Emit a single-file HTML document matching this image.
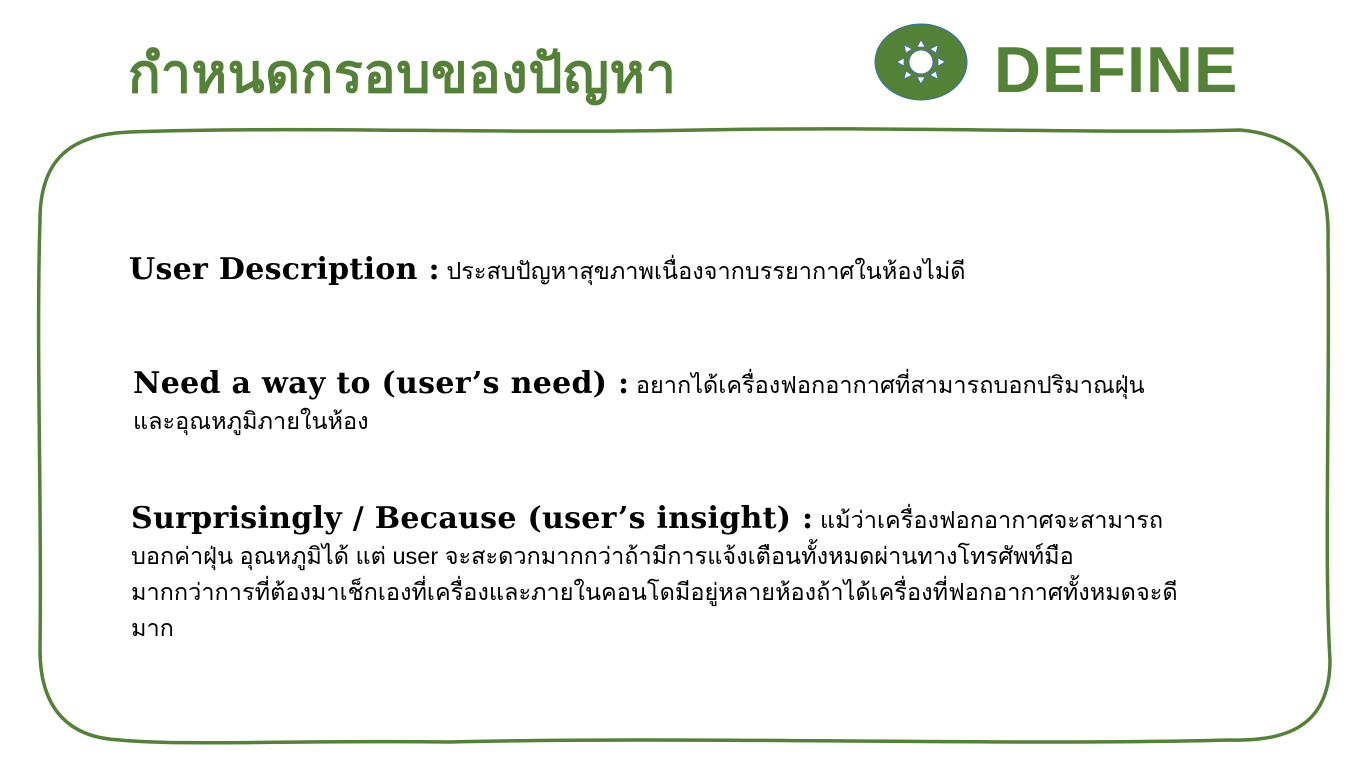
<!DOCTYPE html>
<html><head><meta charset="utf-8">
<style>
body{margin:0;width:1365px;height:767px;background:#fff;position:relative;overflow:hidden;font-family:"Liberation Sans",sans-serif}
.t{position:absolute;white-space:nowrap}
.title{left:128px;top:30px;font-size:54px;font-weight:bold;color:#538135;letter-spacing:0.5px}
.def{left:994px;top:32px;font-size:65px;font-weight:bold;color:#538135;letter-spacing:1px}
.p{position:absolute;left:133px;font-size:23.5px;color:#000;line-height:36px;width:1150px;white-space:nowrap}
.p b{font-family:"DejaVu Serif",serif;font-size:30px;font-weight:bold;letter-spacing:0.3px}
</style></head><body>
<svg width="1365" height="767" style="position:absolute;left:0;top:0">
<path d="M130 132 C300 126 500 134 700 130 C900 126 1100 134 1240 130 C1300 135 1330 170 1328 240 C1330 400 1324 560 1330 660 C1330 720 1295 742 1230 740 C1000 746 700 736 450 742 C300 740 180 746 120 740 C70 738 40 710 40 650 C42 500 36 350 40 220 C40 160 70 134 130 132 Z" fill="none" stroke="#538135" stroke-width="3.5"/>
<ellipse cx="921" cy="62" rx="46" ry="38" fill="#538135" stroke="#2e75b6" stroke-width="1"/>
<circle cx="921" cy="62" r="12" fill="#fff" stroke="#4472c4" stroke-width="1"/>
<g fill="#fff" stroke="#4472c4" stroke-width="0.8">
<polygon points="921,40 917,47 925,47"/><polygon points="921,84 917,77 925,77"/>
<polygon points="897,62 904,58 904,66"/><polygon points="945,62 938,58 938,66"/>
<polygon points="904,45 906,53 912,49"/><polygon points="938,45 936,53 930,49"/>
<polygon points="904,79 906,71 912,75"/><polygon points="938,79 936,71 930,75"/>
</g>
</svg>
<div class="t title">กำหนดกรอบของปัญหา</div>
<div class="t def">DEFINE</div>
<div class="p" style="left:129px;top:252px"><b>User Description :</b> ประสบปัญหาสุขภาพเนื่องจากบรรยากาศในห้องไม่ดี</div>
<div class="p" style="top:366px"><b>Need a way to (user’s need) :</b> อยากได้เครื่องฟอกอากาศที่สามารถบอกปริมาณฝุ่น<br>และอุณหภูมิภายในห้อง</div>
<div class="p" style="left:131px;top:501px"><b>Surprisingly / Because (user’s insight) :</b> แม้ว่าเครื่องฟอกอากาศจะสามารถ<br>บอกค่าฝุ่น อุณหภูมิได้ แต่ user จะสะดวกมากกว่าถ้ามีการแจ้งเตือนทั้งหมดผ่านทางโทรศัพท์มือ<br>มากกว่าการที่ต้องมาเช็กเองที่เครื่องและภายในคอนโดมีอยู่หลายห้องถ้าได้เครื่องที่ฟอกอากาศทั้งหมดจะดี<br>มาก</div>
</body></html>
